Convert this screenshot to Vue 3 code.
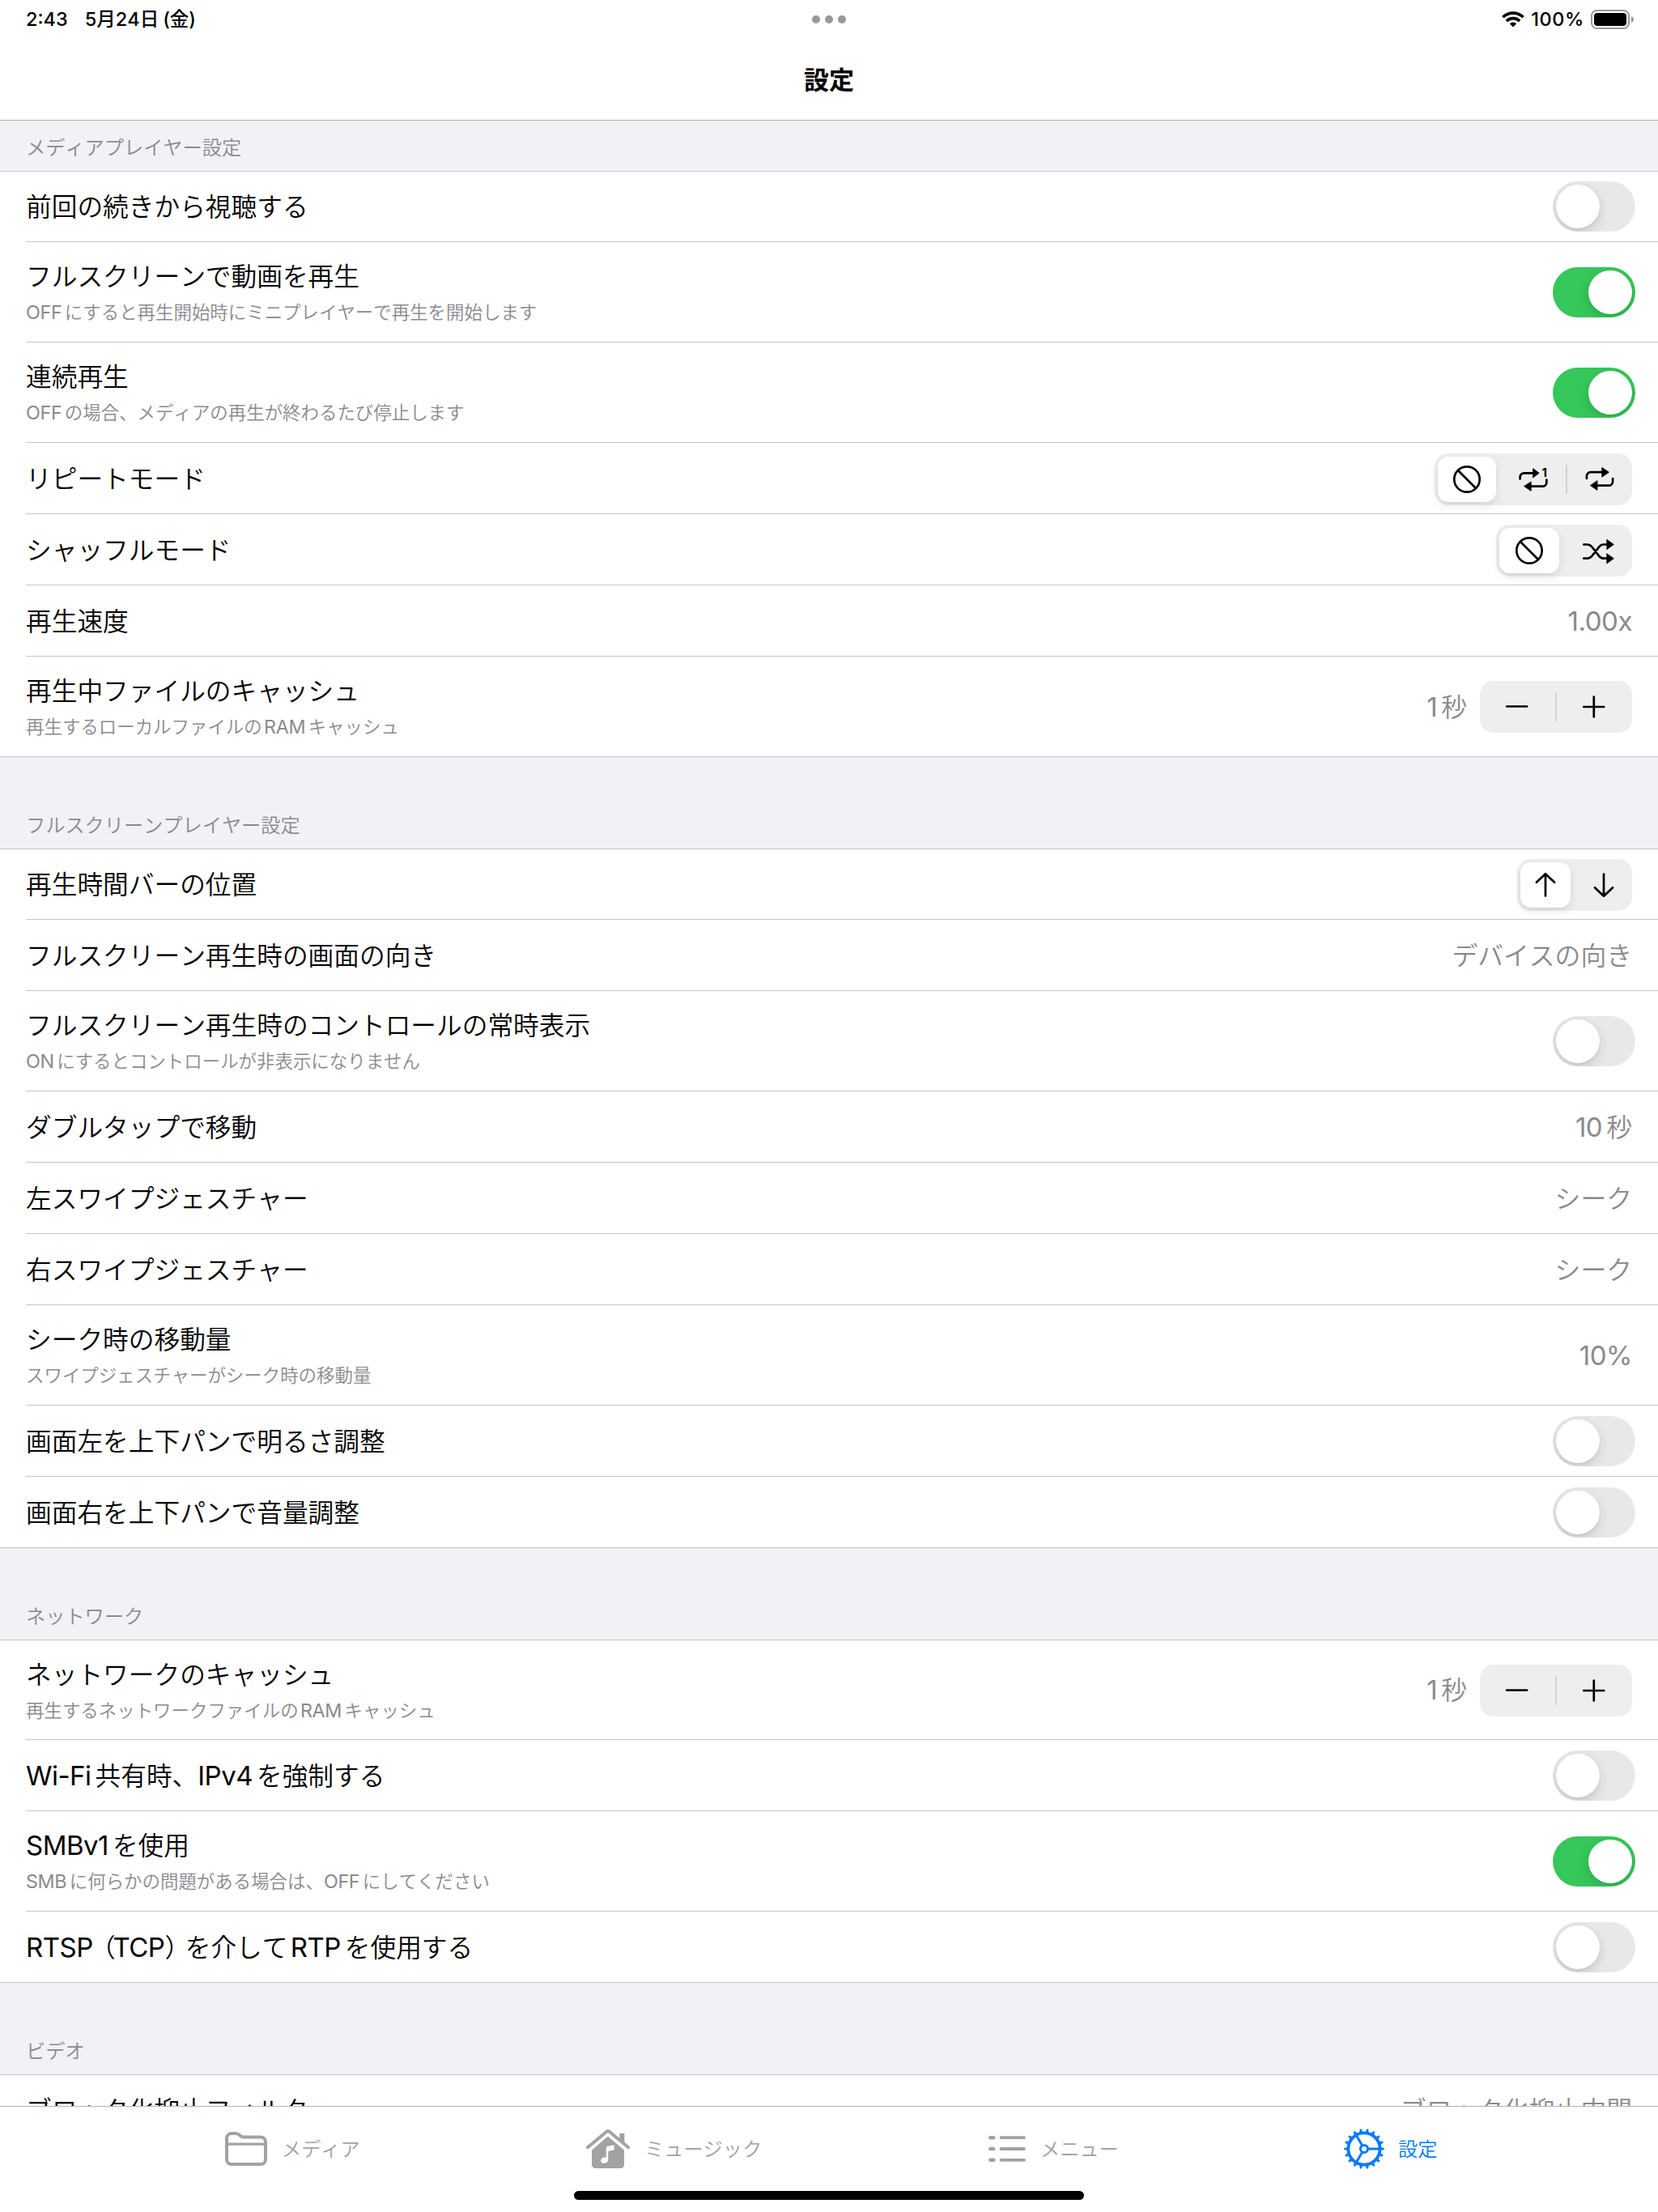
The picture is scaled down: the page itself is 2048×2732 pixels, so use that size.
<script setup>
import { h } from 'vue'

// Splits mixed text so Latin runs and brackets can be sized and spaced apart from Japanese ones
const Mixed = (props) =>
  h('span', { class: 'mixed' }, props.text.split(/([A-Za-z0-9.%\-:]+|[（）])/).filter(Boolean).map((part, i, all) => {
    if (part === '（') return h('span', { class: 'open' }, part)
    if (part === '）') return h('span', { class: 'close' }, part)
    const latin = /^[A-Za-z0-9.%\-:]/.test(part)
    return latin
      ? h('span', { class: ['latin', { lead: i > 0 && !/[、（]$/.test(all[i - 1]), trail: i < all.length - 1 && !/^[（）]/.test(all[i + 1]) }] }, part)
      : part
  }))
Mixed.props = ['text']

const sections = [
  {
    title: 'メディアプレイヤー設定',
    rows: [
      { label: '前回の続きから視聴する', toggle: false },
      { label: 'フルスクリーンで動画を再生', sub: 'OFFにすると再生開始時にミニプレイヤーで再生を開始します', toggle: true },
      { label: '連続再生', sub: 'OFFの場合、メディアの再生が終わるたび停止します', toggle: true },
      { label: 'リピートモード', segments: ['none', 'one', 'all'], size: 'w3' },
      { label: 'シャッフルモード', segments: ['none', 'shuffle'], size: 'w2' },
      { label: '再生速度', value: '1.00x' },
      { label: '再生中ファイルのキャッシュ', sub: '再生するローカルファイルのRAMキャッシュ', value: '1秒', stepper: true },
    ],
  },
  {
    title: 'フルスクリーンプレイヤー設定',
    rows: [
      { label: '再生時間バーの位置', segments: ['up', 'down'], size: 'w1' },
      { label: 'フルスクリーン再生時の画面の向き', value: 'デバイスの向き' },
      { label: 'フルスクリーン再生時のコントロールの常時表示', sub: 'ONにするとコントロールが非表示になりません', toggle: false },
      { label: 'ダブルタップで移動', value: '10秒' },
      { label: '左スワイプジェスチャー', value: 'シーク' },
      { label: '右スワイプジェスチャー', value: 'シーク' },
      { label: 'シーク時の移動量', sub: 'スワイプジェスチャーがシーク時の移動量', value: '10%' },
      { label: '画面左を上下パンで明るさ調整', toggle: false },
      { label: '画面右を上下パンで音量調整', toggle: false },
    ],
  },
  {
    title: 'ネットワーク',
    rows: [
      { label: 'ネットワークのキャッシュ', sub: '再生するネットワークファイルのRAMキャッシュ', value: '1秒', stepper: true },
      { label: 'Wi-Fi共有時、IPv4を強制する', toggle: false },
      { label: 'SMBv1を使用', sub: 'SMBに何らかの問題がある場合は、OFFにしてください', toggle: true },
      { label: 'RTSP（TCP）を介してRTPを使用する', toggle: false },
    ],
  },
  {
    title: 'ビデオ',
    rows: [{ label: 'ブロック化抑止フィルタ', value: 'ブロック化抑止中間' }],
  },
]

const teeth = Array.from({ length: 18 }, (_, i) => i * 20)
</script>

<template>
  <div class="screen">
    <header class="top">
      <div class="status">
        <div class="clock"><span class="time">2:43</span><span class="date">5月24日<span class="paren">(金)</span></span></div>
        <div class="dots"><i></i><i></i><i></i></div>
        <div class="indicators">
          <svg class="wifi" width="28" height="20" viewBox="0 0 28 20">
            <g fill="none" stroke="#000" stroke-width="3.7">
              <path d="M1.4 7.3a18 18 0 0 1 25.2 0" />
              <path d="M5.9 12a11.5 11.5 0 0 1 16.2 0" />
            </g>
            <path d="M14 19.4l-4.2-4.1a6 6 0 0 1 8.4 0z" />
          </svg>
          <span class="percent">100%</span>
          <svg class="battery" width="54" height="24" viewBox="0 0 54 24">
            <rect x="1" y="1" width="46" height="22" rx="6.5" fill="none" stroke="#999" stroke-width="2" />
            <rect x="4" y="4" width="40" height="16" rx="4" />
            <path d="M50 8.2c4 1.5 4 6.1 0 7.6z" fill="#999" />
          </svg>
        </div>
      </div>
      <h1>設定</h1>
    </header>

    <main>
      <section v-for="s in sections" :key="s.title">
        <h2>{{ s.title }}</h2>
        <div v-for="r in s.rows" :key="r.label" class="row" :class="{ tall: r.sub }">
          <div class="texts">
            <div class="label"><Mixed :text="r.label" /></div>
            <div v-if="r.sub" class="sub"><Mixed :text="r.sub" /></div>
          </div>
          <div v-if="r.value" class="value"><Mixed :text="r.value" /></div>
          <div v-if="r.stepper" class="stepper">
            <svg width="93" height="64" viewBox="0 0 93 64"><path d="M33.2 31.5h25" /></svg>
            <i></i>
            <svg width="93" height="64" viewBox="0 0 93 64"><path d="M33.3 32h25M45.8 19.5v25" /></svg>
          </div>
          <div v-if="r.segments" class="segmented" :class="r.size">
            <template v-for="(g, i) in r.segments" :key="g">
              <i v-if="i" :class="{ hidden: i === 1 }"></i>
              <div class="segment" :class="{ selected: i === 0 }">
                <svg v-if="g === 'none'" width="36" height="36" viewBox="0 0 36 36">
                  <circle cx="18" cy="18" r="15.7" /><path d="M7 7l22 22" />
                </svg>
                <svg v-else-if="g === 'one'" width="36" height="36" viewBox="0 0 36 36">
                  <path d="M1.6 17.5v-2.2a5 5 0 0 1 5-5H18M34.4 18.500v3.200a5 5 0 0 1-5 5H15" />
                  <path class="solid" d="M17.800 4.800l7.400 5.500-7.400 5.500zM15.200 21.200v11.200l-8.400-5.700z" />
                  <text x="28.600" y="15.200">1</text>
                </svg>
                <svg v-else-if="g === 'all'" width="36" height="36" viewBox="0 0 36 36">
                  <path d="M1.9 17v-2.8a5 5 0 0 1 5-5H21M34.1 17v3.7a5 5 0 0 1-5 5H15" />
                  <path class="solid" d="M21 3.500l8.400 5.800-8.400 5.800zM15 20V31.500l-8.400-5.800z" />
                </svg>
                <svg v-else-if="g === 'shuffle'" width="40" height="34" viewBox="0 0 40 34">
                  <path d="M2.3 9.5h4.2c2.6 0 4.3 1 6 3l8.800 11.300c1.5 2 3.2 2.9 5.7 2.9H31M2.3 26.7h4.2c2.6 0 4.3-1 6-3l8.800-11.300c1.5-2 3.2-2.9 5.7-2.900H31" />
                  <path class="solid" d="M31 3.5l8.400 6-8.400 6zM31 20.9l8.400 5.9-8.400 6z" />
                </svg>
                <svg v-else-if="g === 'up'" width="32" height="34" viewBox="0 0 32 34">
                  <path d="M16 30.5V3.5M4.9 13.8L16 3.2l11.1 10.6" />
                </svg>
                <svg v-else width="32" height="34" viewBox="0 0 32 34">
                  <path d="M16 3.5v27M4.9 20.2L16 30.8l11.1-10.6" />
                </svg>
              </div>
            </template>
          </div>
          <div v-if="r.toggle !== undefined" class="toggle" :class="{ on: r.toggle }"><i></i></div>
        </div>
      </section>
    </main>

    <footer>
      <nav>
        <a>
          <svg width="52" height="42" viewBox="0 0 52 42" fill="none" stroke="currentColor">
            <path stroke-width="4" d="M2 8a6 6 0 0 1 6-6h5.2c2.3 0 3.4.8 4.8 2.2 1.6 1.5 2.6 2.2 5 2.2H44a6 6 0 0 1 6 6V34a6 6 0 0 1-6 6H8a6 6 0 0 1-6-6z" />
            <path stroke-width="3.2" d="M3 15.2h46" />
          </svg>
          <span>メディア</span>
        </a>
        <a>
          <svg width="54" height="48" viewBox="0 0 54 48" fill="currentColor">
            <path d="M41.3 6a1.2 1.2 0 0 1 1.2-1.2h3.6A1.2 1.2 0 0 1 47.3 6v12l-6-5z" />
            <path d="M1.9 22.3L25.2 2.8a2.8 2.8 0 0 1 3.6 0l23.3 19.5" fill="none" stroke="currentColor" stroke-width="3.9" stroke-linecap="round" />
            <path d="M27 8.6l20 17V43.5a4.5 4.5 0 0 1-4.5 4.5h-31A4.5 4.5 0 0 1 7 43.5V25.6z" />
            <ellipse cx="22.600" cy="38.200" rx="4.6" ry="3.7" transform="rotate(-18 22.6 38.2)" fill="#fff" />
            <path d="M24.8 37.5V22.3q0-1 1-1.3l7.7-1.6q1.2-.2 1.2.9v4.2q0 .9-.9 1.1l-6.600 1.5V38z" fill="#fff" />
          </svg>
          <span>ミュージック</span>
        </a>
        <a>
          <svg width="46" height="34" viewBox="0 0 46 34" fill="none" stroke="currentColor" stroke-linecap="round">
            <path stroke-width="4.6" d="M2.3 3.2h4M2.3 17h4M2.3 30.8h4" />
            <path stroke-width="3.8" d="M15.5 3.2H44M15.5 17H44M15.5 30.8H44" />
          </svg>
          <span>メニュー</span>
        </a>
        <a class="active">
          <svg width="50" height="50" viewBox="-25 -25 50 50" fill="none" stroke="currentColor">
            <circle r="19.6" stroke-width="3.8" />
            <circle r="4.6" stroke-width="3" />
            <path v-for="a in [0, 120, 240]" :key="'s' + a" d="M5.5 0H19" stroke-width="3" :transform="`rotate(${a})`" />
            <path v-for="a in teeth" :key="a" d="M20.5-2.1L24.4-1.1Q25-.8 25 0T24.4 1.1L20.5 2.1z" fill="currentColor" stroke="none" :transform="`rotate(${a})`" />
          </svg>
          <span>設定</span>
        </a>
      </nav>
      <div class="home"></div>
    </footer>
  </div>
</template>

<style>
body {
  margin: 0;
  background: #fff;
}
.mixed .latin {
  font-size: 1.04em;
  font-weight: 400;
  font-kerning: normal;
  line-height: 1;
  letter-spacing: -0.015em;
}
.mixed .lead {
  margin-left: 0.1em;
}
.mixed .trail {
  margin-right: 0.15em;
}
.mixed .open {
  margin: 0 -0.1em 0 -0.12em;
}
.mixed .close {
  margin-right: -0.2em;
}
</style>

<style scoped>
.screen {
  width: 2048px;
  height: 2732px;
  display: flex;
  flex-direction: column;
  overflow: hidden;
  background: #fff;
  color: #000;
  font-family: Inter, 'Noto Sans CJK JP', sans-serif;
  font-kerning: none;
}
.top {
  height: 148px;
  border-bottom: 1px solid #adadaf;
  flex: none;
}
.status {
  display: grid;
  grid-template-columns: 1fr 42px 1fr;
  align-items: center;
  height: 48px;
  font-size: 23.5px;
  font-weight: 500;
}
.clock {
  display: flex;
  gap: 21px;
  padding-left: 32px;
  line-height: 32px;
}
.paren {
  margin-left: 5px;
}
.dots {
  display: flex;
  justify-content: center;
  gap: 6px;
}
.dots i {
  width: 10px;
  height: 10px;
  border-radius: 50%;
  background: #999;
}
.indicators {
  display: flex;
  justify-content: flex-end;
  align-items: center;
  padding-right: 29px;
}
.percent {
  margin: 0 8px 0 8px;
  line-height: 32px;
  letter-spacing: 0.6px;
}
h1 {
  margin: 31px 0 0;
  font-size: 31px;
  line-height: 40px;
  font-weight: 700;
  text-align: center;
}
main {
  flex: 1;
  min-height: 0;
  overflow: hidden;
}
h2 {
  display: flex;
  align-items: flex-end;
  box-sizing: border-box;
  height: 114px;
  margin: 0;
  padding: 0 32px 12px;
  border-bottom: 1px solid #c6c6c8;
  background: #f2f1f6;
  color: #8a8a8e;
  font-size: 24.2px;
  line-height: 32px;
  font-weight: 350;
}
section:first-child h2 {
  height: 63px;
}
.row {
  display: flex;
  align-items: center;
  box-sizing: border-box;
  height: 88px;
  margin-left: 32px;
  padding-right: 32px;
  border-bottom: 1px solid #c6c6c8;
}
.row.tall {
  height: 124px;
}
h2 + .row {
  height: 87px;
}
h2 + .row.tall {
  height: 123px;
}
.row:last-child {
  margin-left: 0;
  padding-left: 32px;
}
.texts {
  flex: 1;
  padding-top: 2px;
}
.label {
  font-size: 31.7px;
  line-height: 40px;
  font-weight: 350;
}
.sub {
  margin-top: 9px;
  color: #8a8a8e;
  font-size: 22.45px;
  line-height: 30px;
  font-weight: 350;
}
.value {
  padding-top: 2px;
  color: #8a8a8e;
  font-size: 31.8px;
  line-height: 40px;
  font-weight: 350;
}
.stepper,
.segmented {
  display: flex;
  align-items: center;
  height: 64px;
  margin-top: 2px;
  border-radius: 17px;
  background: #eee;
}
.stepper {
  width: 188px;
  margin-top: 1px;
  margin-left: 16px;
}
.stepper i,
.segmented i {
  width: 2px;
  height: 36px;
  border-radius: 1px;
  background: #d3d3d5;
}
.segmented i.hidden {
  visibility: hidden;
}
.stepper svg,
.segmented svg {
  fill: none;
  stroke: #000;
  stroke-width: 2.7;
  stroke-linecap: round;
  stroke-linejoin: round;
}
.segmented .solid {
  fill: #000;
  stroke-width: 0.8;
}
.segmented text {
  fill: #000;
  stroke: none;
  font-size: 15px;
  font-weight: 700;
}
.w3 {
  width: 244px;
}
.w2 {
  width: 168px;
}
.w1 {
  width: 142px;
}
.segment {
  display: flex;
  align-items: center;
  justify-content: center;
  height: 56px;
}
.segment.selected {
  margin: 0 4px;
  border-radius: 13px;
  background: #fff;
  box-shadow: 0 4px 12px rgba(0, 0, 0, 0.1), 0 2px 2px rgba(0, 0, 0, 0.03);
}
.w3 .segment {
  flex: 0 0 80px;
}
.w3 .segment.selected {
  flex-basis: 72px;
}
.w2 .segment {
  flex: 0 0 84px;
}
.w2 .segment.selected {
  flex-basis: 74px;
}
.w1 .segment {
  flex: 0 0 70px;
}
.w1 .segment.selected {
  flex-basis: 62px;
}
.toggle {
  width: 102px;
  height: 62px;
  margin-right: -4px;
  border-radius: 31px;
  background: #e8e8ea;
  overflow: hidden;
}
.toggle i {
  display: block;
  width: 54px;
  height: 54px;
  margin: 4px;
  border-radius: 50%;
  background: #fff;
  box-shadow: 0 5px 14px rgba(0, 0, 0, 0.15), 0 2px 2px rgba(0, 0, 0, 0.04);
}
.toggle.on {
  background: #35c759;
}
.toggle.on i {
  margin-left: 44px;
}
footer {
  flex: none;
  box-sizing: border-box;
  height: 131px;
  border-top: 1px solid #b2b2b2;
  background: #fff;
}
nav {
  display: grid;
  grid-template-columns: 446px 497px 439px 1fr;
  height: 104px;
  padding-left: 278px;
}
a {
  display: flex;
  align-items: center;
  gap: 18px;
  color: #a2a2a2;
  font-size: 24.2px;
  line-height: 32px;
  font-weight: 350;
}
a span {
  padding-top: 2px;
}
a.active {
  gap: 17px;
  color: #007aff;
}
.home {
  width: 630px;
  height: 11px;
  margin: 0 auto;
  border-radius: 6px;
  background: #000;
}
</style>
